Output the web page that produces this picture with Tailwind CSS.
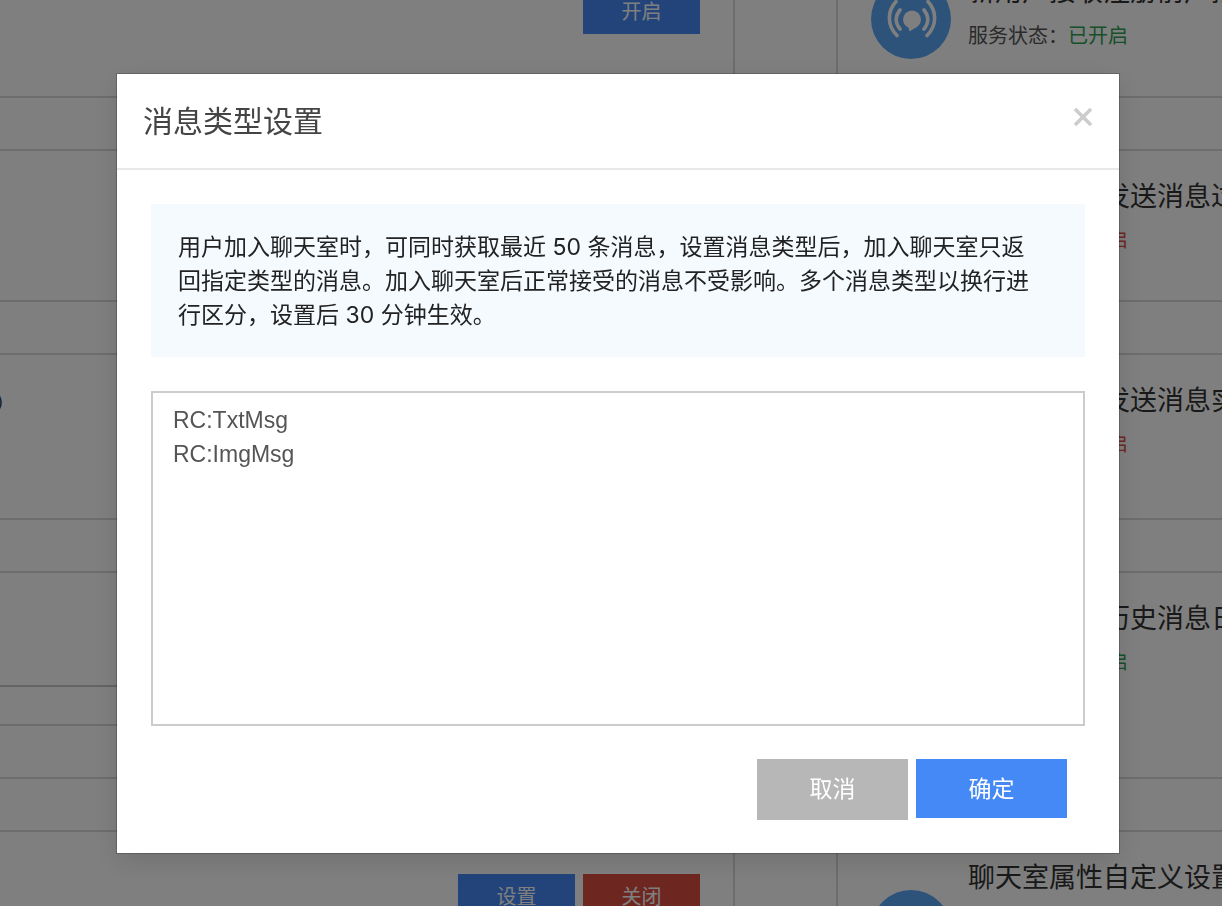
<!DOCTYPE html>
<html lang="zh-CN">
<head>
    <meta charset="UTF-8">
    <meta name="viewport" content="width=device-width, initial-scale=1.0">
    <title>消息类型设置</title>
    <script src="https://cdn.jsdelivr.net/npm/@tailwindcss/browser@4"></script>
</head>
<body class="h-screen overflow-hidden bg-white font-['Noto_Sans_CJK_SC',sans-serif] text-[#333]">
    <!-- service list -->
    <main class="-mt-14 flex h-[962px] gap-[101px] overflow-hidden whitespace-nowrap text-[20px] leading-[30px]">
        <div class="flex w-[735px] shrink-0 flex-col gap-[51px]">
            <section class="flex h-[154px] shrink-0 justify-end border-y-2 border-r-2 border-[#dadada] pt-[43px] pr-[33px]">
                <button class="h-[45px] w-[117px] bg-[#4489f5] pb-0.5 text-white">开启</button>
            </section>
            <section class="h-[153px] shrink-0 border-y-2 border-r-2 border-[#dadada]"></section>
            <section class="h-[167px] shrink-0 overflow-hidden border-y-2 border-r-2 border-[#dadada] pt-8">
                <p class="-ml-[110px]">聊天室（RC）</p>
            </section>
            <section class="flex h-[208px] shrink-0 flex-col justify-end border-y-2 border-r-2 border-[#dadada]">
                <div class="mb-[51px] h-[41px] border-y-2 border-t-[#c8c8c8] border-b-[#dadada]"></div>
            </section>
            <section class="flex h-[200px] shrink-0 items-start justify-end gap-2 border-y-2 border-r-2 border-[#dadada] pt-[42px] pr-[33px]">
                <button class="h-[45px] w-[117px] bg-[#4489f5] pb-0.5 text-white">设置</button>
                <button class="h-[45px] w-[117px] bg-[#dd4e41] pb-0.5 text-white">关闭</button>
            </section>
        </div>

        <div class="flex min-w-0 grow flex-col gap-[51px]">
            <section class="flex h-[154px] shrink-0 gap-[17px] overflow-hidden border-y-2 border-l-2 border-[#dadada] pl-[33px]">
                <svg class="mt-[33px] size-20 shrink-0" viewBox="0 0 80 80" fill="none" stroke="#fff" stroke-width="3.6" stroke-linecap="round">
                    <circle cx="40" cy="40" r="40" fill="#5ba6f7" stroke="none"/>
                    <circle cx="41" cy="40.500" r="9" fill="#fff" stroke="none"/>
                    <path d="M37 47l1.500 5.500 8-5z" fill="#fff" stroke="none"/>
                    <path d="M29 31c-5 6-5 13 0 19M25 22.500c-9 10-9 24 1 34M53 31c5 6 5 13 0 19M57 22.500c9 10 9 24-1 34"/>
                </svg>
                <div class="pt-[23px]">
                    <h3 class="text-[27px] leading-[42px]">新用户接收注册前广播</h3>
                    <p class="pt-[9px] text-[#555]">服务状态：<span class="text-[#2fa052]">已开启</span></p>
                </div>
            </section>
            <section class="flex h-[153px] shrink-0 gap-[17px] overflow-hidden border-y-2 border-l-2 border-[#dadada] pl-[33px]">
                <span class="mt-[33px] size-20 shrink-0 rounded-full bg-[#5ba6f7]"></span>
                <div class="pt-[23px]">
                    <h3 class="text-[27px] leading-[42px]">未加入群组发送消息过滤</h3>
                    <p class="pt-2 text-[#555]">服务状态：<span class="text-[#dd4e41]">未开启</span></p>
                </div>
            </section>
            <section class="flex h-[167px] shrink-0 gap-[17px] overflow-hidden border-y-2 border-l-2 border-[#dadada] pl-[33px]">
                <span class="mt-[33px] size-20 shrink-0 rounded-full bg-[#5ba6f7]"></span>
                <div class="pt-[23px]">
                    <h3 class="text-[27px] leading-[42px]">聊天室用户发送消息实时</h3>
                    <p class="pt-2 text-[#555]">服务状态：<span class="text-[#dd4e41]">未开启</span></p>
                </div>
            </section>
            <section class="flex h-[208px] shrink-0 gap-[17px] overflow-hidden border-y-2 border-l-2 border-[#dadada] pl-[33px]">
                <span class="mt-[33px] size-20 shrink-0 rounded-full bg-[#5ba6f7]"></span>
                <div class="pt-[23px]">
                    <h3 class="text-[27px] leading-[42px]">聊天室云端历史消息日志</h3>
                    <p class="pt-2 text-[#555]">服务状态：<span class="text-[#2fa052]">已开启</span></p>
                </div>
            </section>
            <section class="flex h-[200px] shrink-0 gap-[17px] overflow-hidden border-y-2 border-l-2 border-[#dadada] pl-[33px]">
                <span class="mt-[58px] size-20 shrink-0 rounded-full bg-[#5ba6f7]"></span>
                <div class="pt-[23px]">
                    <h3 class="text-[27px] leading-[42px]">聊天室属性自定义设置</h3>
                </div>
            </section>
        </div>
    </main>

    <!-- modal -->
    <div class="fixed inset-0 flex items-start justify-center bg-black/50 pt-[74px] pl-3.5">
        <div role="dialog" aria-labelledby="modalTitle" class="w-full max-w-[1002px] bg-white shadow-[0_0_0_1px_rgba(0,0,0,0.2),0_8px_25px_rgba(0,0,0,0.12)]">
            <div class="flex h-24 items-center justify-between border-b-2 border-[#e8e8e8] px-[26px] pb-1">
                <h2 id="modalTitle" class="text-[30px] leading-[44px] text-[#444]">消息类型设置</h2>
                <button aria-label="关闭" class="mb-1">
                    <svg class="size-5" viewBox="0 0 20 20" stroke="#ccc" stroke-width="3.6" stroke-linecap="butt">
                        <path d="M2 2l16 16M18 2L2 18"/>
                    </svg>
                </button>
            </div>
            <div class="px-[34px] pt-[34px] pb-[33px]">
                <p class="bg-[#f4fafe] pt-[26px] pr-[46px] pb-[25px] pl-[27px] font-[Inter,'Noto_Sans_CJK_SC',sans-serif] text-[23px] leading-[34px] text-[#222]">用户加入聊天室时，可同时获取最近 50 条消息，设置消息类型后，加入聊天室只返回指定类型的消息。加入聊天室后正常接受的消息不受影响。多个消息类型以换行进行区分，设置后 30 分钟生效。</p>
                <textarea id="msgTypes" aria-label="消息类型" class="mt-[34px] block h-[335px] w-full resize-none border-2 border-[#ccc] px-5 py-2.5 font-['Liberation_Sans','Noto_Sans_CJK_SC',sans-serif] text-[23px] leading-[34px] text-[#555] outline-none">RC:TxtMsg
RC:ImgMsg</textarea>
                <div class="mt-[33px] flex items-start justify-end gap-2 pr-[18px] text-[23px] leading-[34px] text-white">
                    <button class="h-[61px] w-[151px] bg-[#b7b7b7] pb-1.5">取消</button>
                    <button class="h-[59px] w-[151px] bg-[#4489f5] pb-1">确定</button>
                </div>
            </div>
        </div>
    </div>
</body>
</html>
